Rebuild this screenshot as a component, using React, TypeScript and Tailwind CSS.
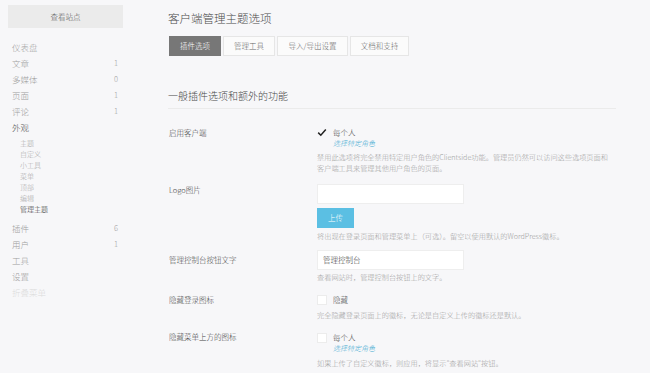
import React from "react";

const font = { fontFamily: '"Noto Sans CJK SC", "Noto Sans", sans-serif' };

function Check() {
  return (
    <svg width="10" height="9" viewBox="0 0 10 9" className="block">
      <path d="M1.2 4.6 L3.8 7.2 L8.8 1.4" fill="none" stroke="#222" strokeWidth="1.5" />
    </svg>
  );
}

function Box() {
  return <div className="w-[10px] h-[10px] bg-white border border-[#ececec]" />;
}

export default function App() {
  const menu1 = [
    ["仪表盘", ""],
    ["文章", "1"],
    ["多媒体", "0"],
    ["页面", "1"],
    ["评论", "1"],
  ];
  const sub = ["主题", "自定义", "小工具", "菜单", "顶部", "编辑"];
  const menu2 = [
    ["插件", "6"],
    ["用户", "1"],
    ["工具", ""],
    ["设置", ""],
  ];
  return (
    <div className="w-[650px] h-[373px] overflow-hidden bg-[#f7f7f9] flex font-light" style={font}>
      {/* Sidebar */}
      <div className="w-[150px] shrink-0 flex flex-col">
        <div className="ml-2 mt-[5px] w-[115px] h-[23px] bg-[#ebebeb] flex items-center justify-center text-[7.5px] text-[#555]">
          查看站点
        </div>
        <div className="mt-[11px] flex flex-col">
          {menu1.map(([t, n]) => (
            <div key={t} className="h-4 pl-3 pr-[32px] flex items-center justify-between text-[8.5px] text-[#a0a0a0]">
              <span>{t}</span>
              <span className="text-[7.5px]">{n}</span>
            </div>
          ))}
          <div className="h-4 pl-3 flex items-center text-[8.5px] text-[#555]">外观</div>
          <div className="mt-[3px] flex flex-col">
            {sub.map((t) => (
              <div key={t} className="h-[11px] pl-5 flex items-center text-[7px] text-[#aaa]">
                {t}
              </div>
            ))}
            <div className="h-[11px] pl-5 flex items-center text-[7px] text-[#333]">管理主题</div>
          </div>
          <div className="mt-[5px] flex flex-col">
            {menu2.map(([t, n]) => (
              <div key={t} className="h-4 pl-3 pr-[32px] flex items-center justify-between text-[8.5px] text-[#a0a0a0]">
                <span>{t}</span>
                <span className="text-[7.5px]">{n}</span>
              </div>
            ))}
            <div className="h-4 pl-3 flex items-center text-[8.5px] text-[#dcdcdc]">折叠菜单</div>
          </div>
        </div>
      </div>

      {/* Main */}
      <div className="flex-1 pl-[18px] flex flex-col">
        <div className="mt-[11px] h-4 flex items-center text-[11.5px] text-[#4a4a4a]">客户端管理主题选项</div>
        <div className="mt-[9px] flex gap-[2px] ml-px">
          <div className="w-[52px] h-5 bg-[#777] text-white text-[7.5px] flex items-center justify-center">插件选项</div>
          <div className="w-[52px] h-5 bg-[#fbfbfb] border border-[#e6e6e6] text-[#666] text-[7.5px] flex items-center justify-center">管理工具</div>
          <div className="w-[71px] h-5 bg-[#fbfbfb] border border-[#e6e6e6] text-[#666] text-[7.5px] flex items-center justify-center">导入/导出设置</div>
          <div className="w-[59px] h-5 bg-[#fbfbfb] border border-[#e6e6e6] text-[#666] text-[7.5px] flex items-center justify-center">文档和支持</div>
        </div>
        <div className="mt-[32px] h-[14px] flex items-center text-[10px] text-[#4a4a4a]">一般插件选项和额外的功能</div>
        <div className="mt-[6px] w-[448px] h-px bg-[#ebebeb]" />

        {/* Row 1 */}
        <div className="mt-[18px] flex">
          <div className="w-[148px] ml-px h-[11px] flex items-center text-[7.5px] text-[#444]">启用客户端</div>
          <div className="flex flex-col">
            <div className="h-[11px] flex items-center gap-[6px]">
              <Check />
              <span className="text-[7.5px] text-[#444]">每个人</span>
            </div>
            <div className="h-[11px] pl-4 flex items-center text-[7px] italic text-[#3aa8d0]">选择特定角色</div>
            <div className="mt-[3px] text-[7.2px] leading-[11px] text-[#a0a0a0] w-[310px]">
              禁用此选项将完全禁用特定用户角色的Clientside功能。管理员仍然可以访问这些选项页面和
              <br />
              客户端工具来管理其他用户角色的页面。
            </div>
          </div>
        </div>

        {/* Row 2 */}
        <div className="mt-[10px] flex">
          <div className="w-[148px] ml-px h-[11px] flex items-center text-[7.5px] text-[#444]">Logo图片</div>
          <div className="flex flex-col">
            <div className="w-[147px] h-5 bg-white border border-[#eeeeee]" />
            <div className="mt-1 w-[37px] h-5 bg-[#5bbfe3] text-white text-[7.5px] flex items-center justify-center">上传</div>
            <div className="mt-[3px] h-[11px] flex items-center text-[7.2px] text-[#a0a0a0] whitespace-nowrap">
              将出现在登录页面和管理菜单上（可选）。留空以使用默认的WordPress徽标。
            </div>
          </div>
        </div>

        {/* Row 3 */}
        <div className="mt-[8px] flex">
          <div className="w-[148px] ml-px h-5 flex items-center text-[7.5px] text-[#444]">管理控制台按钮文字</div>
          <div className="flex flex-col">
            <div className="w-[147px] h-5 bg-white border border-[#eeeeee] flex items-center pl-[5px] text-[7.5px] text-[#333]">管理控制台</div>
            <div className="mt-[2px] h-[11px] flex items-center text-[7.2px] text-[#a0a0a0]">查看网站时，管理控制台按钮上的文字。</div>
          </div>
        </div>

        {/* Row 4 */}
        <div className="mt-[11px] flex">
          <div className="w-[148px] ml-px h-[11px] flex items-center text-[7.5px] text-[#444]">隐藏登录图标</div>
          <div className="flex flex-col">
            <div className="h-[11px] flex items-center gap-[6px]">
              <Box />
              <span className="text-[7.5px] text-[#444]">隐藏</span>
            </div>
            <div className="mt-[5px] h-[11px] flex items-center text-[7.2px] text-[#a0a0a0]">完全隐藏登录页面上的徽标，无论是自定义上传的徽标还是默认。</div>
          </div>
        </div>

        {/* Row 5 */}
        <div className="mt-[10px] flex">
          <div className="w-[148px] ml-px h-[11px] flex items-center text-[7.5px] text-[#444]">隐藏菜单上方的图标</div>
          <div className="flex flex-col">
            <div className="h-[11px] mt-[1px] flex items-center gap-[6px]">
              <Box />
              <span className="text-[7.5px] text-[#444]">每个人</span>
            </div>
            <div className="h-[11px] pl-4 flex items-center text-[7px] italic text-[#3aa8d0]">选择特定角色</div>
            <div className="mt-[4px] h-[11px] flex items-center text-[7.2px] text-[#a0a0a0]">如果上传了自定义徽标，则应用，将显示"查看网站"按钮。</div>
          </div>
        </div>
      </div>
    </div>
  );
}
